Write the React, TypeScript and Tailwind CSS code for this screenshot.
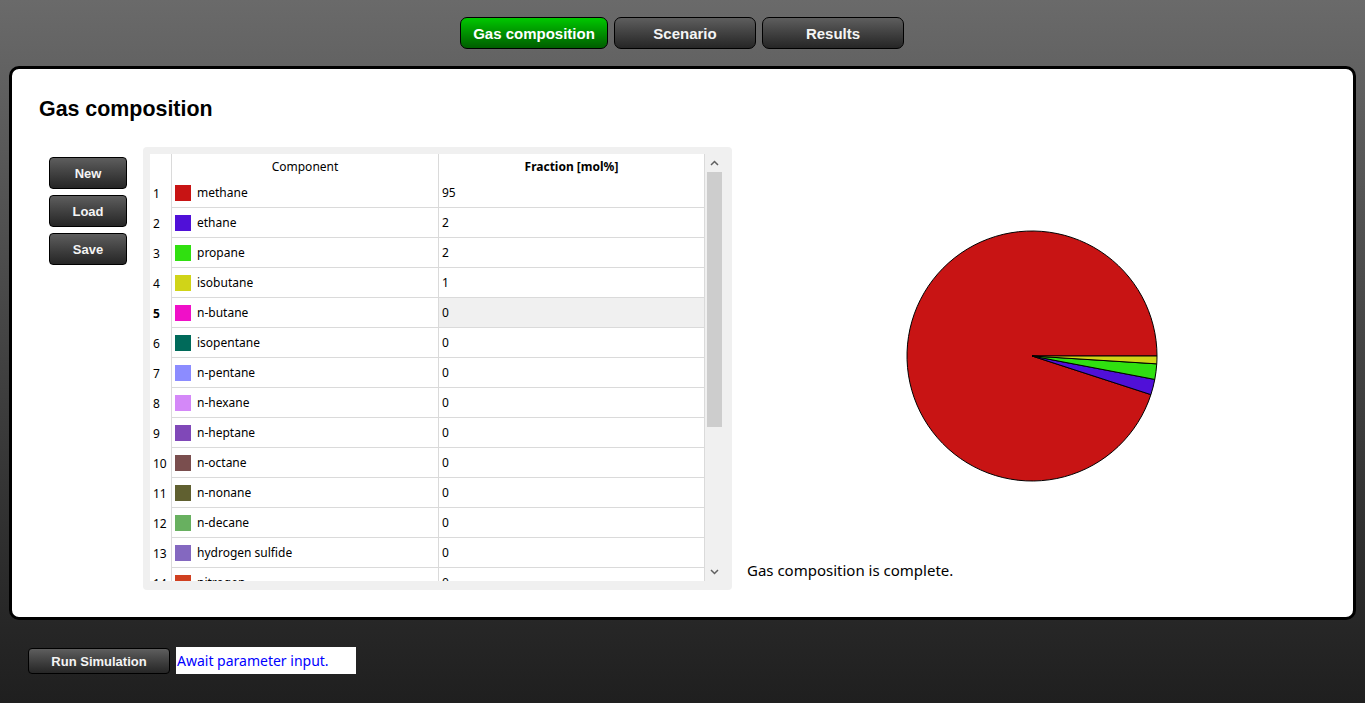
import React from "react";

const rows: { name: string; color: string; value: string }[] = [
  { name: "methane", color: "#c81414", value: "95" },
  { name: "ethane", color: "#5010d8", value: "2" },
  { name: "propane", color: "#30e010", value: "2" },
  { name: "isobutane", color: "#d0d418", value: "1" },
  { name: "n-butane", color: "#f010c8", value: "0" },
  { name: "isopentane", color: "#006a5a", value: "0" },
  { name: "n-pentane", color: "#8c8cff", value: "0" },
  { name: "n-hexane", color: "#d488f8", value: "0" },
  { name: "n-heptane", color: "#8048b8", value: "0" },
  { name: "n-octane", color: "#7a4e4e", value: "0" },
  { name: "n-nonane", color: "#606030", value: "0" },
  { name: "n-decane", color: "#68b060", value: "0" },
  { name: "hydrogen sulfide", color: "#8468c0", value: "0" },
  { name: "nitrogen", color: "#d04020", value: "0" },
];

function Pie() {
  const cx = 126;
  const cy = 126;
  const r = 125;
  const slices = rows
    .map((row) => ({ color: row.color, v: parseFloat(row.value) }))
    .filter((s) => s.v > 0);
  const total = slices.reduce((a, s) => a + s.v, 0);
  let a = 0;
  const pt = (deg: number) => {
    const rad = (deg * Math.PI) / 180;
    return [cx + r * Math.cos(rad), cy - r * Math.sin(rad)];
  };
  return (
    <svg width="252" height="252" viewBox="0 0 252 252">
      {slices.map((s, i) => {
        const a0 = a;
        const a1 = a + (s.v / total) * 360;
        a = a1;
        const [x0, y0] = pt(a0);
        const [x1, y1] = pt(a1);
        const large = a1 - a0 > 180 ? 1 : 0;
        return (
          <path
            key={i}
            d={`M ${cx} ${cy} L ${x0} ${y0} A ${r} ${r} 0 ${large} 0 ${x1} ${y1} Z`}
            fill={s.color}
            stroke="#000"
            strokeWidth="1"
            strokeLinejoin="round"
          />
        );
      })}
    </svg>
  );
}

const darkBtn =
  "border border-black bg-gradient-to-b from-[#5e5e5e] to-[#262626] text-[#f4f4f4] font-bold flex items-center justify-center";

export default function App() {
  return (
    <div
      className="w-full h-[703px] flex flex-col overflow-hidden bg-gradient-to-b from-[#6a6a6a] to-[#1f1f1f]"
      style={{ fontFamily: '"Liberation Sans", Arial, sans-serif' }}
    >
      {/* Tabs */}
      <div className="pt-[17px] flex justify-center gap-[6px] pr-[1px]">
        <div className="w-[148px] h-[32px] rounded-[7px] border border-black bg-gradient-to-b from-[#00c800] to-[#005e00] text-white font-bold text-[15px] flex items-center justify-center pt-[2px]">
          Gas composition
        </div>
        <div className={`w-[142px] h-[32px] rounded-[7px] text-[15px] pt-[2px] ${darkBtn}`}>Scenario</div>
        <div className={`w-[142px] h-[32px] rounded-[7px] text-[15px] pt-[2px] ${darkBtn}`}>Results</div>
      </div>

      {/* Main panel */}
      <div className="mt-[17px] mx-[9px] h-[554px] bg-white border-[3px] border-black rounded-[10px] flex flex-col">
        <div className="pl-[27px] pt-[28px] text-[21.4px] font-bold text-black leading-[24px]">
          Gas composition
        </div>
        <div className="flex mt-[26px]">
          {/* Buttons */}
          <div className="ml-[37px] mt-[10px] flex flex-col gap-[6px]">
            {["New", "Load", "Save"].map((b) => (
              <div key={b} className={`w-[78px] h-[32px] rounded-[4px] text-[13px] pt-[1px] ${darkBtn}`}>
                {b}
              </div>
            ))}
          </div>

          {/* Table */}
          <div
            className="ml-[16px] w-[589px] h-[443px] bg-[#f0f0f0] rounded-[4px] pt-[7px] pl-[7px] flex"
            style={{ fontFamily: '"Noto Sans", "Open Sans", sans-serif' }}
          >
            <div className="w-[555px] h-[427px] bg-white overflow-hidden border-r border-[#dadada] text-[12px] text-black">
              {/* Header */}
              <div className="flex h-[24px]">
                <div className="w-[22px] border-r border-[#dadada]" />
                <div className="w-[267px] border-r border-[#dadada] flex items-center justify-center pt-[2px]">
                  Component
                </div>
                <div className="flex-1 flex items-center justify-center font-bold pt-[2px]">Fraction [mol%]</div>
              </div>
              {rows.map((row, i) => {
                const sel = i === 4;
                return (
                  <div key={row.name} className="flex h-[30px]">
                    <div className={`w-[22px] border-r border-[#dadada] flex items-center pl-[3px] pt-[2px] ${sel ? "font-bold" : ""}`}>
                      {i + 1}
                    </div>
                    <div className="w-[267px] border-r border-b border-[#dadada] flex items-center pl-[3px]">
                      <span className="w-[16px] h-[16px] mr-[6px] shrink-0" style={{ backgroundColor: row.color }} />
                      <span className="pt-[1px]">{row.name}</span>
                    </div>
                    <div className={`flex-1 border-b border-[#dadada] flex items-center pl-[3px] pt-[1px] ${sel ? "bg-[#f0f0f0]" : ""}`}>
                      {row.value}
                    </div>
                  </div>
                );
              })}
            </div>
            {/* Scrollbar */}
            <div className="w-[17px] h-[427px] flex flex-col items-center pl-[1px]">
              <div className="h-[18px] flex items-center justify-center text-[#606060]">
                <svg width="9" height="6" viewBox="0 0 9 6">
                  <path d="M1 5 L4.5 1.5 L8 5" fill="none" stroke="#606060" strokeWidth="1.5" />
                </svg>
              </div>
              <div className="w-[15px] h-[255px] bg-[#cdcdcd]" />
              <div className="flex-1" />
              <div className="h-[18px] flex items-center justify-center">
                <svg width="9" height="6" viewBox="0 0 9 6">
                  <path d="M1 1 L4.5 4.5 L8 1" fill="none" stroke="#606060" strokeWidth="1.5" />
                </svg>
              </div>
            </div>
          </div>

          {/* Chart */}
          <div className="flex flex-col pl-[15px]" style={{ fontFamily: '"Noto Sans", "Open Sans", sans-serif' }}>
            <div className="ml-[159px] mt-[83px]">
              <Pie />
            </div>
            <div className="mt-[78px] text-[15px] leading-[20px] text-black">Gas composition is complete.</div>
          </div>
        </div>
      </div>

      {/* Bottom bar */}
      <div className="mt-[27px] flex items-start pl-[28px] gap-[6px]">
        <div className={`mt-[1px] w-[142px] h-[26px] rounded-[4px] text-[13px] pt-[1px] ${darkBtn}`}>Run Simulation</div>
        <div
          className="w-[180px] h-[27px] bg-white text-[#0000ff] text-[14px] flex items-center pl-[1px]"
          style={{ fontFamily: '"Noto Sans", "Open Sans", sans-serif' }}
        >
          Await parameter input.
        </div>
      </div>
    </div>
  );
}
